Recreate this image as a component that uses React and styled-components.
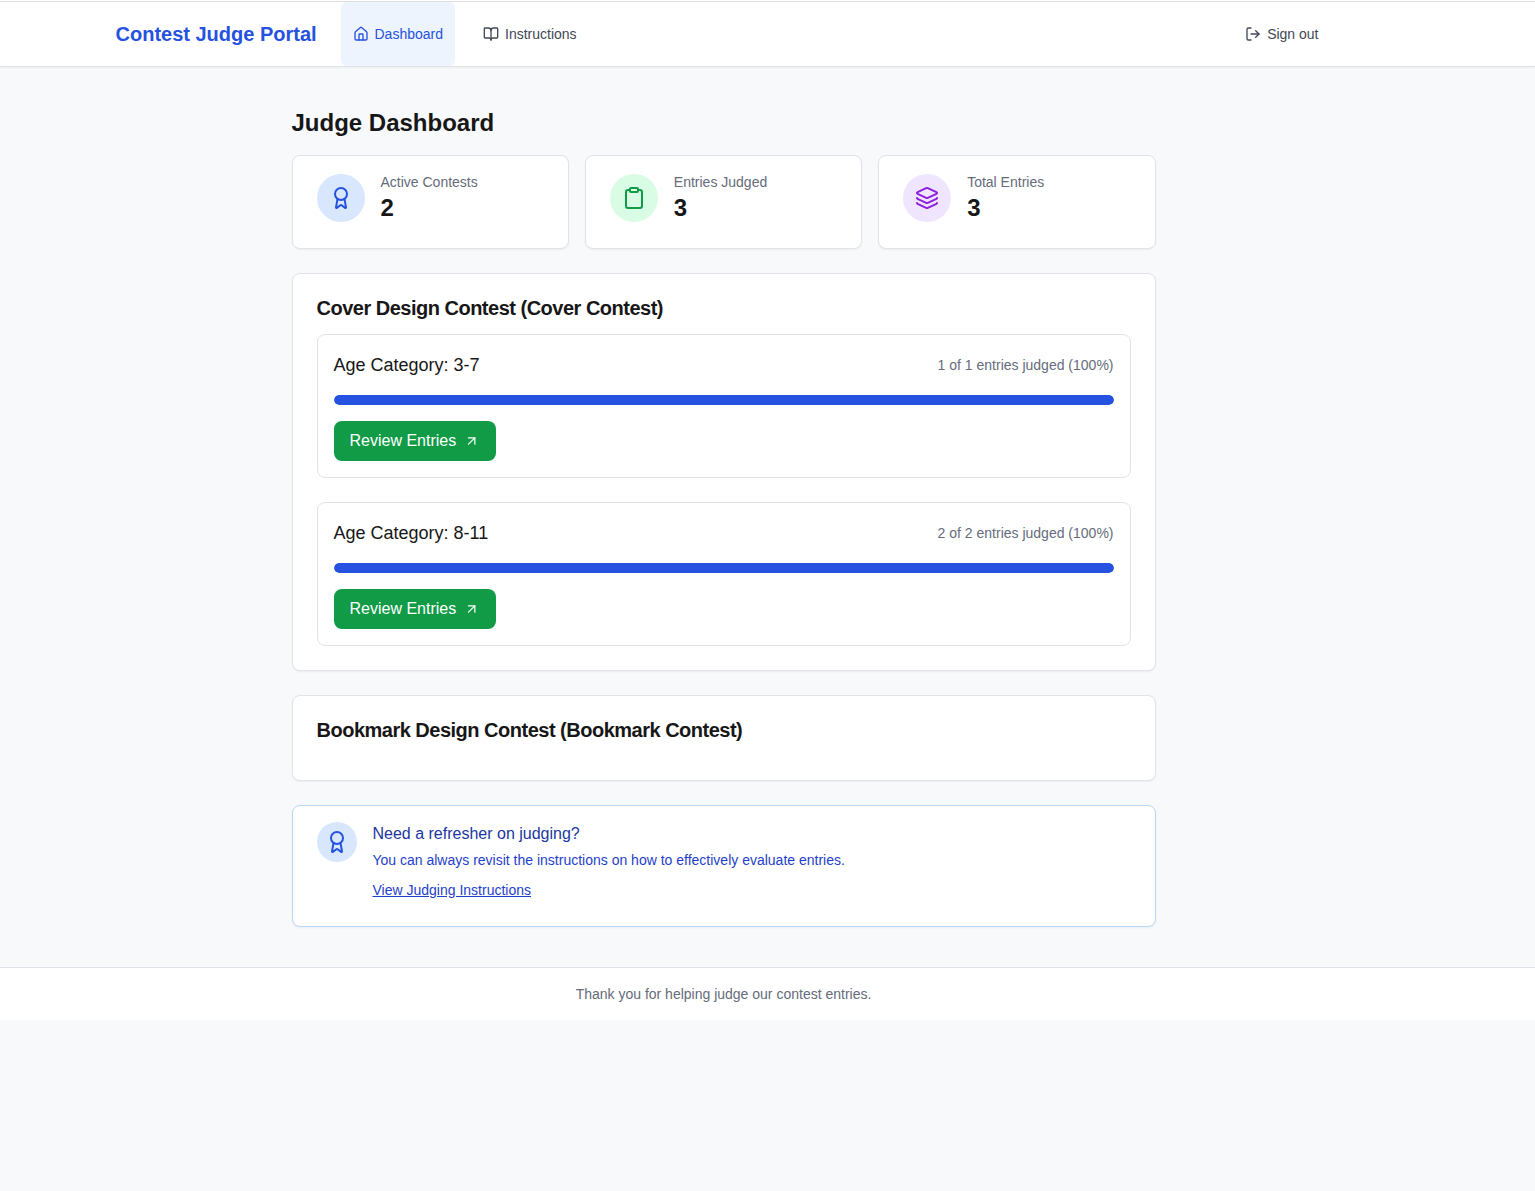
import React from "react";
import styled, { createGlobalStyle } from "styled-components";
import { House, BookOpen, LogOut, Award, Clipboard, Layers, ArrowUpRight } from "lucide-react";

const GlobalStyle = createGlobalStyle`
  *, *::before, *::after { box-sizing: border-box; }
  body {
    margin: 0;
    background: #f8f9fb;
    color: #171717;
    font-family: "Liberation Sans", Arial, sans-serif;
    font-size: 16px;
    line-height: 24px;
  }
  h1, h2, h3, p { margin: 0; }
  a { color: inherit; text-decoration: none; }
`;

const Page = styled.div`
  min-height: 1191px;
  background: #f8f9fb;
`;

const TopEdge = styled.div`
  background: #fff;
  display: flow-root;
`;

const Header = styled.header`
  margin-top: 1px;
  border-top: 1px solid #dcdee0;
  border-bottom: 1px solid #dfe2e8;
  background: #fff;
  box-shadow: 0 1px 2px rgba(0, 0, 0, 0.05);
  padding-right: 88px;
`;

const HeaderInner = styled.div`
  display: flex;
  justify-content: space-between;
  max-width: 1280px;
  height: 64px;
  margin: 0 auto;
  padding: 0 32px;
`;

const NavGroup = styled.nav`
  display: flex;
  align-items: stretch;
`;

const Brand = styled.a`
  display: flex;
  align-items: center;
  width: 201px;
  margin-right: 24px;
  color: #2552e0;
  font-size: 20px;
  font-weight: 700;
  white-space: nowrap;
`;

const NavLink = styled.a`
  display: flex;
  align-items: center;
  gap: 6px;
  padding: 0 12px;
  margin-right: 16px;
  border-radius: 6px;
  font-size: 14px;
  color: ${(p) => (p.$active ? "#2552e0" : "#414856")};
  background: ${(p) => (p.$active ? "#edf4fe" : "transparent")};
`;

const SignOut = styled(NavLink)`
  margin-right: 1px;
`;

const Main = styled.main`
  padding: 40px 88px 40px 0;
`;

const Content = styled.div`
  display: flex;
  flex-direction: column;
  gap: 24px;
  width: 864px;
  margin: 0 auto;
`;

const Title = styled.h1`
  font-size: 24px;
  font-weight: 700;
  line-height: 32px;
  margin-bottom: -8px;
`;

const Card = styled.section`
  background: #fff;
  border: 1px solid ${(p) => (p.$accent ? "#b9d6fb" : "#e1e3e8")};
  border-radius: 8px;
  box-shadow: 0 1px 2px rgba(0, 0, 0, 0.05);
`;

const StatGrid = styled.div`
  display: grid;
  grid-template-columns: repeat(3, 1fr);
  gap: 16px;
`;

const StatCard = styled(Card)`
  display: flex;
  align-items: flex-start;
  gap: 16px;
  height: 94px;
  padding: 16px 24px;
`;

const IconDisc = styled.span`
  display: flex;
  flex: none;
  align-items: center;
  justify-content: center;
  width: ${(p) => p.$size}px;
  height: ${(p) => p.$size}px;
  border-radius: 50%;
  color: ${(p) => p.$color};
  background: ${(p) => p.$bg};
`;

const StatDisc = styled(IconDisc)`
  margin-top: 2px;
`;

const StatLabel = styled.p`
  font-size: 14px;
  line-height: 20px;
  color: #656c7b;
`;

const StatValue = styled.p`
  font-size: 24px;
  font-weight: 700;
  line-height: 32px;
`;

const ContestCard = styled(Card)`
  padding: 22px 24px 24px;
  min-height: 86px;
`;

const ContestTitle = styled.h2`
  font-size: 20px;
  font-weight: 700;
  line-height: 24px;
  letter-spacing: -0.5px;
`;

const CategoryList = styled.div`
  display: flex;
  flex-direction: column;
  gap: 24px;
  margin-top: 14px;
`;

const Category = styled.article`
  height: 144px;
  padding: 16px;
  border: 1px solid #e1e3e8;
  border-radius: 8px;
`;

const CategoryHead = styled.div`
  display: flex;
  align-items: center;
  justify-content: space-between;
  height: 28px;
`;

const CategoryName = styled.h3`
  font-size: 18px;
  font-weight: 400;
`;

const CategoryStatus = styled.span`
  font-size: 14px;
  color: #656c7b;
`;

const Track = styled.div`
  height: 10px;
  margin: 16px 0;
  border-radius: 5px;
  background: #e5e7eb;
  overflow: hidden;
`;

const Fill = styled.div`
  height: 100%;
  border-radius: 5px;
  background: #2552e0;
`;

const ReviewButton = styled.a`
  display: inline-flex;
  align-items: center;
  gap: 8px;
  width: 162px;
  height: 40px;
  padding: 0 16px;
  border-radius: 8px;
  color: #fff;
  background: #119b46;
  white-space: nowrap;
`;

const HelpCard = styled(Card)`
  display: flex;
  gap: 16px;
  height: 122px;
  padding: 16px 24px;
`;

const HelpTitle = styled.h3`
  font-size: 16px;
  font-weight: 400;
  line-height: 24px;
  color: #20379f;
`;

const HelpText = styled.p`
  margin-top: 4px;
  font-size: 14px;
  line-height: 20px;
  color: #1f41cb;
`;

const HelpLink = styled.a`
  display: inline-block;
  margin-top: 10px;
  font-size: 14px;
  line-height: 20px;
  color: #1f41cb;
  text-decoration: underline;
`;

const Footer = styled.footer`
  height: 53px;
  padding: 16px 88px 16px 0;
  border-top: 1px solid #dfe2e8;
  background: #fff;
  color: #656c7b;
  font-size: 14px;
  line-height: 20px;
  text-align: center;
`;

const stats = [
  { label: "Active Contests", value: 2, Icon: Award, color: "#2552e0", bg: "#d8e7fd" },
  { label: "Entries Judged", value: 3, Icon: Clipboard, color: "#119b46", bg: "#d8fce4" },
  { label: "Total Entries", value: 3, Icon: Layers, color: "#8f1fe0", bg: "#f0e5fe" },
];

const contests = [
  {
    title: "Cover Design Contest (Cover Contest)",
    categories: [
      { age: "3-7", judged: 1, total: 1 },
      { age: "8-11", judged: 2, total: 2 },
    ],
  },
  { title: "Bookmark Design Contest (Bookmark Contest)", categories: [] },
];

function CategoryPanel({ age, judged, total }) {
  const percent = Math.round((judged / total) * 100);
  return (
    <Category>
      <CategoryHead>
        <CategoryName>Age Category: {age}</CategoryName>
        <CategoryStatus>{`${judged} of ${total} entries judged (${percent}%)`}</CategoryStatus>
      </CategoryHead>
      <Track>
        <Fill style={{ width: `${percent}%` }} />
      </Track>
      <ReviewButton href="#">
        Review Entries
        <ArrowUpRight size={16} strokeWidth={1.9} />
      </ReviewButton>
    </Category>
  );
}

export default function App() {
  return (
    <Page>
      <GlobalStyle />
      <TopEdge>
        <Header>
          <HeaderInner>
            <NavGroup>
              <Brand href="#">Contest Judge Portal</Brand>
              <NavLink href="#" $active>
                <House size={16} />
                Dashboard
              </NavLink>
              <NavLink href="#">
                <BookOpen size={16} />
                Instructions
              </NavLink>
            </NavGroup>
            <SignOut href="#">
              <LogOut size={16} />
              Sign out
            </SignOut>
          </HeaderInner>
        </Header>
      </TopEdge>
      <Main>
        <Content>
          <Title>Judge Dashboard</Title>
          <StatGrid>
            {stats.map(({ label, value, Icon, color, bg }) => (
              <StatCard key={label}>
                <StatDisc $size={48} $color={color} $bg={bg}>
                  <Icon size={24} />
                </StatDisc>
                <div>
                  <StatLabel>{label}</StatLabel>
                  <StatValue>{value}</StatValue>
                </div>
              </StatCard>
            ))}
          </StatGrid>
          {contests.map(({ title, categories }) => (
            <ContestCard key={title}>
              <ContestTitle>{title}</ContestTitle>
              {categories.length > 0 && (
                <CategoryList>
                  {categories.map((category) => (
                    <CategoryPanel key={category.age} {...category} />
                  ))}
                </CategoryList>
              )}
            </ContestCard>
          ))}
          <HelpCard $accent>
            <IconDisc $size={40} $color="#2552e0" $bg="#d8e7fd">
              <Award size={24} />
            </IconDisc>
            <div>
              <HelpTitle>Need a refresher on judging?</HelpTitle>
              <HelpText>You can always revisit the instructions on how to effectively evaluate entries.</HelpText>
              <HelpLink href="#">View Judging Instructions</HelpLink>
            </div>
          </HelpCard>
        </Content>
      </Main>
      <Footer>Thank you for helping judge our contest entries.</Footer>
    </Page>
  );
}
